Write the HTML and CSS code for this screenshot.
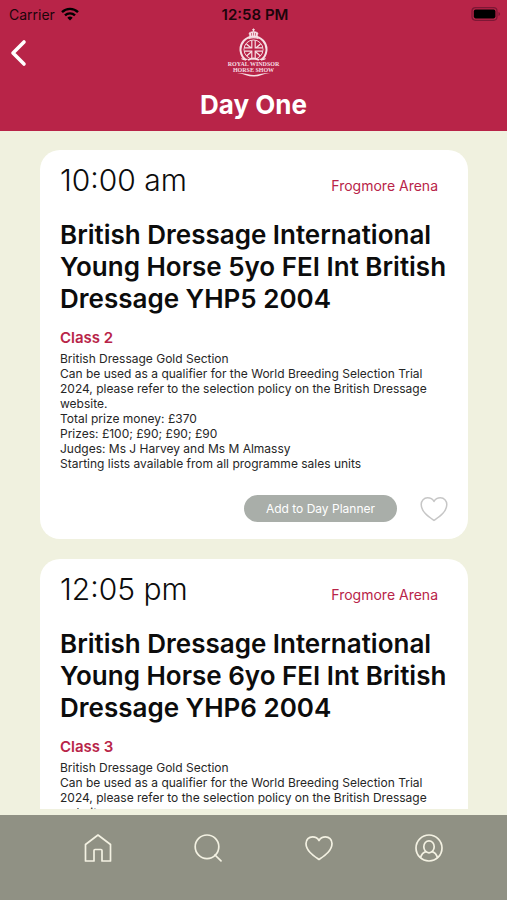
FILE: index.html
```html
<!DOCTYPE html>
<html lang="en">
<head>
    <meta charset="UTF-8">
    <meta name="viewport" content="width=device-width, initial-scale=1.0">
    <title>Day One - Royal Windsor Horse Show</title>
    <link rel="stylesheet" href="styles.css">
</head>
<body>
    <header class="header">
        <div class="status-bar">
            <div class="carrier">
                <span>Carrier</span>
                <svg width="18" height="14" viewBox="0 0 18 14" fill="none" stroke="#000" stroke-width="2.4" aria-hidden="true">
                    <path d="M1 5.2a11.4 11.4 0 0 1 16 0"/>
                    <path d="M4 8.4a7.2 7.2 0 0 1 10 0"/>
                    <path d="M9 13.6l-2.7-2.8a3.9 3.9 0 0 1 5.4 0z" fill="#000" stroke="none"/>
                </svg>
            </div>
            <span class="clock">12:58 PM</span>
            <svg class="battery" width="30" height="14" viewBox="0 0 30 14" aria-hidden="true">
                <rect x="1" y="0.7" width="25" height="12.6" rx="3.5" fill="none" stroke="#7d1735" stroke-width="1.2"/>
                <rect x="2.8" y="2.6" width="21.6" height="8.8" rx="1.8" fill="#000"/>
                <path d="M27.5 5v4q1.6-.7 1.6-2t-1.6-2z" fill="#7d1735"/>
            </svg>
        </div>
        <div class="brand-row">
            <button class="back-button" aria-label="Back">
                <svg width="18" height="28" viewBox="0 0 18 28" fill="none" stroke="#fff" stroke-width="3.6" stroke-linecap="round" stroke-linejoin="round">
                    <path d="M14 3L3 14L14 25"/>
                </svg>
            </button>
            <svg class="logo" width="60" height="50" viewBox="0 0 60 50" fill="none" stroke="#f6dfe4" role="img" aria-label="Royal Windsor Horse Show">
                <path d="M29.5 .5v3M28 1.8h3" stroke-width="1"/>
                <path d="M26 9l-1-4q2-1.500 4.500-1.500T34 5l-1 4z" fill="#f6dfe4" stroke-width=".6"/>
                <path d="M27.500 5v3M29.500 4.500v3.500M31.500 5v3" stroke="#b82448" stroke-width=".6"/>
                <path d="M24.500 10.500q5-1.500 10 0" stroke-width="1.200"/>
                <path d="M22 32A13 13 0 1 1 37 32" stroke-width="2"/>
                <path d="M17.500 30.500q3 2 6 .5M41.500 30.500q-3 2-6 .5" stroke-width="1.300"/>
                <circle cx="29.500" cy="21.500" r="9.500" stroke-width="1"/>
                <path d="M22.500 16l14 12M36.500 16l-14 12" stroke-width="1.300"/>
                <path d="M29.500 13v17M20.500 21.500h18" stroke-width="4.600"/>
                <path d="M29.500 13v17M20.500 21.500h18" stroke="#b82448" stroke-width="2.200"/>
                <path d="M24 32q5.500-3 11 0" stroke-width="1.800"/>
                <g class="logo-text">
                    <text x="29.500" y="38">ROYAL WINDSOR</text>
                    <text x="29.500" y="44">HORSE SHOW</text>
                </g>
                <path d="M13 45q6 0 10 1t6.500 1 6.500-1 10-1q-6 .8-9 2.200t-7.500 1.300-7.500-1.300T13 45z" fill="#f6dfe4" stroke="none"/>
            </svg>
        </div>
        <h1>Day One</h1>
    </header>

    <main class="schedule">
        <article class="card">
            <div class="card-top">
                <time class="card-time" datetime="10:00">10:00 am</time>
                <span class="card-arena">Frogmore Arena</span>
            </div>
            <h2>British Dressage International Young Horse 5yo FEI Int British Dressage YHP5 2004</h2>
            <h3>Class 2</h3>
            <p>
                British Dressage Gold Section<br>
                Can be used as a qualifier for the World Breeding Selection Trial 2024, please refer to the selection policy on the British Dressage website.<br>
                Total prize money: £370<br>
                Prizes: £100; £90; £90; £90<br>
                Judges: Ms J Harvey and Ms M Almassy<br>
                Starting lists available from all programme sales units
            </p>
            <div class="card-actions">
                <button class="planner-button">Add to Day Planner</button>
                <button class="like-button" aria-label="Add to favourites">
                    <svg width="28" height="26" viewBox="0 0 28 26" fill="none" stroke="#c6c6c6" stroke-width="1.500" stroke-linejoin="round">
                        <path d="M14 24.500C9 21 1.200 16 1.200 8.500C1.200 4.500 4 1.800 7.500 1.800C10.500 1.800 12.800 3.300 14 5.500C15.200 3.300 17.500 1.800 20.500 1.800C24 1.800 26.800 4.500 26.800 8.500C26.800 16 19 21 14 24.500z"/>
                    </svg>
                </button>
            </div>
        </article>

        <article class="card">
            <div class="card-top">
                <time class="card-time" datetime="12:05">12:05 pm</time>
                <span class="card-arena">Frogmore Arena</span>
            </div>
            <h2>British Dressage International Young Horse 6yo FEI Int British Dressage YHP6 2004</h2>
            <h3>Class 3</h3>
            <p>
                British Dressage Gold Section<br>
                Can be used as a qualifier for the World Breeding Selection Trial 2024, please refer to the selection policy on the British Dressage website.
            </p>
        </article>
    </main>

    <nav class="tab-bar">
        <a href="#home" aria-label="Home">
            <svg width="28" height="28" viewBox="0 0 28 28">
                <path d="M1.500 10.500L14 1L26.500 10.500V27H18V16.500Q18 15.500 17 15.500H11Q10 15.500 10 16.500V27H1.500z"/>
            </svg>
        </a>
        <a href="#search" aria-label="Search">
            <svg width="28" height="28" viewBox="0 0 28 28">
                <circle cx="13" cy="12.800" r="11.800"/>
                <path d="M21 21l6 5.800"/>
            </svg>
        </a>
        <a href="#favourites" aria-label="Favourites">
            <svg width="28" height="28" viewBox="0 0 28 28">
                <path d="M14 25.500C9 22 1 17 1 9.500C1 5.500 4 2.800 7.500 2.800C10.500 2.800 12.800 4.300 14 6.500C15.200 4.300 17.500 2.800 20.500 2.800C24 2.800 27 5.500 27 9.500C27 17 19 22 14 25.500z"/>
            </svg>
        </a>
        <a href="#profile" aria-label="Profile">
            <svg width="28" height="28" viewBox="0 0 28 28">
                <circle cx="14" cy="14" r="13"/>
                <ellipse cx="14" cy="12.800" rx="5.200" ry="6"/>
                <path d="M5.500 23.500Q7 18.800 10.800 17.600M22.500 23.500Q21 18.800 17.200 17.600"/>
            </svg>
        </a>
    </nav>
</body>
</html>
```
FILE: styles.css
```css
* {
    box-sizing: border-box;
}
body {
    margin: 0;
    height: 100vh;
    display: flex;
    flex-direction: column;
    font-family: Inter, "Liberation Sans", sans-serif;
    background-color: #f0f1df;
    color: #0c0c0c;
}
button {
    border: none;
    padding: 0;
    background: none;
    font-family: inherit;
    cursor: pointer;
}
svg {
    display: block;
}

/* Header */
.header {
    flex: none;
    padding-bottom: 9px;
    background-color: #b82448;
    color: white;
}
.status-bar {
    display: grid;
    grid-template-columns: 1fr auto 1fr;
    align-items: center;
    height: 28px;
    padding: 0 6px 0 9px;
    color: #1c040b;
    font-size: 14px;
}
.carrier {
    display: flex;
    align-items: center;
    gap: 6px;
}
.clock {
    font-size: 15px;
    font-weight: 600;
}
.battery {
    justify-self: end;
}
.brand-row {
    display: grid;
    grid-template-columns: 1fr auto 1fr;
    align-items: center;
    padding: 0 10px;
}
.back-button {
    justify-self: start;
}
.logo-text {
    fill: #f6dfe4;
    stroke: none;
    font-family: "Liberation Serif", serif;
    font-size: 6px;
    font-weight: bold;
    text-anchor: middle;
}
h1 {
    margin: 10px 0 0;
    font-size: 26px;
    line-height: 34px;
    font-weight: 700;
    text-align: center;
}

/* Event list */
.schedule {
    flex: 1;
    min-height: 0;
    margin-bottom: 6px;
    padding: 19px 39px 0 40px;
    overflow: hidden;
}
.card {
    margin-bottom: 20px;
    padding: 12px 20px 17px;
    border-radius: 20px;
    background-color: white;
}
.card-top {
    display: flex;
    justify-content: space-between;
    align-items: baseline;
    padding-right: 10px;
}
.card-time {
    font-size: 30px;
    line-height: 36px;
    font-weight: 300;
}
.card-arena {
    color: #b82448;
    font-size: 14px;
}
h2 {
    margin: 21px 0 0;
    font-size: 26px;
    line-height: 32px;
    font-weight: 600;
}
h3 {
    margin: 14px 0 4px;
    color: #b82448;
    font-size: 15px;
    line-height: 18px;
    font-weight: 600;
}
p {
    margin: 0;
    color: #262626;
    font-size: 12px;
    line-height: 15px;
}
.card-actions {
    display: flex;
    justify-content: flex-end;
    align-items: center;
    gap: 23px;
    margin-top: 24px;
}
.planner-button {
    padding: 0 22px;
    border-radius: 14px;
    background-color: #a9aea9;
    color: white;
    font-size: 12px;
    line-height: 27px;
}

/* Bottom navigation */
.tab-bar {
    flex: none;
    display: grid;
    grid-template-columns: repeat(4, 1fr);
    height: 85px;
    padding: 19px 23px 0 43px;
    background-color: #909184;
}
.tab-bar a {
    justify-self: center;
}
.tab-bar svg {
    fill: none;
    stroke: #f3f1e2;
    stroke-width: 1.7px;
    stroke-linejoin: round;
    stroke-linecap: round;
}
```
